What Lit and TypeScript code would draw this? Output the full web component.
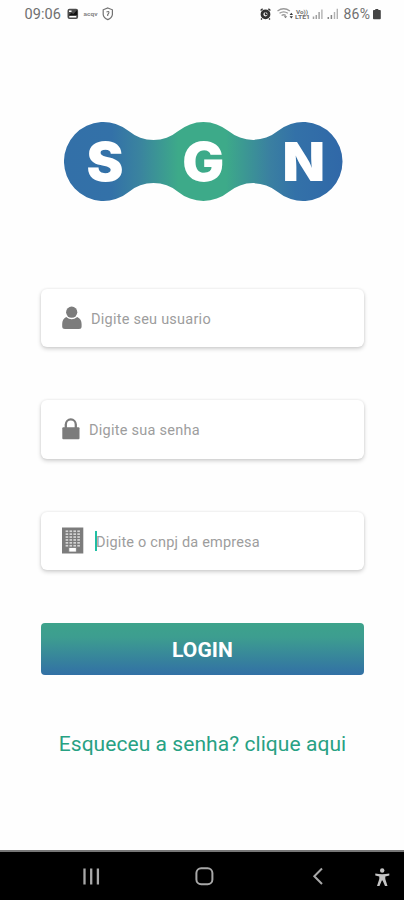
import { LitElement, html, css, svg } from "lit";
import { customElement } from "lit/decorators.js";

const userIcon = html`<svg width="20" height="24" viewBox="0 0 20 24" fill="#7c7c7c">
  <circle cx="9.7" cy="6.2" r="5.6" />
  <path d="M4.2 10.900 Q9.700 15.400 15.200 10.900 Q19.600 13 19.600 18 V20.500 Q19.600 23 17 23 H3 Q.2 23 .2 20.500 V18 Q.2 13 4.200 10.900Z" />
</svg>`;

const lockIcon = html`<svg width="18" height="22" viewBox="0 0 18 22">
  <path d="M3.8 11 V6.6 a5 5.2 0 0 1 10 0 V11" fill="none" stroke="#7c7c7c" stroke-width="2.3" />
  <rect x=".3" y="9.2" width="17.2" height="12" rx="1" fill="#7c7c7c" />
</svg>`;

const windows = [0, 1, 2, 3, 4, 5].flatMap((row) =>
  [0, 1, 2, 3].map(
    (col) => svg`<rect x=${3.6 + col * 3.9} y=${3.4 + row * 2.9} width="2.6" height="1.700" />`
  )
);
const buildingIcon = html`<svg width="22" height="27" viewBox="0 0 22 27">
  <path d="M0 .5 H21.3 V26.5 H0Z" fill="#7c7c7c" />
  <g fill="#d4d4d4">${windows}</g>
  <path d="M6.800 20.500 h7.600 v4.500 H6.800z" fill="#fff" stroke="#7c7c7c" stroke-width=".8" />
</svg>`;

@customElement("status-bar")
class StatusBar extends LitElement {
  static styles = css`
    :host { display: block; height: 28px; }
    svg { display: block; }
    text { font-family: Roboto, sans-serif; fill: #707070; }
    .small { font-size: 6px; font-weight: 700; }
    .tiny { font-size: 6px; font-weight: 700; }
  `;
  render() {
    return html`<svg width="404" height="28" viewBox="0 0 404 28">
      <text x="24.5" y="18.600" font-size="14.5" textLength="36.5">09:06</text>
      <rect x="67.5" y="8.7" width="10.6" height="10.4" rx="2" fill="#4c4c4c" />
      <path d="M69 11.300 h2.500 M69.300 16.800 h7" stroke="#fff" stroke-width="1.600" />
      <path d="M68.500 15.200 l3-2.200 2 1 3.600-4 v5 z" fill="#111" />
      <text class="tiny" x="83.500" y="16" textLength="14" lengthAdjust="spacingAndGlyphs" opacity=".85">acqv</text>
      <path d="M107.8 8 l4.6 1.8 v4.8 q-.6 3.5-4.6 5 q-4-1.500-4.600-5 v-4.800z" fill="none" stroke="#727272" stroke-width="1.2" />
      <path d="M106.500 12 q2.600-1.300 2.400.7 q-.200 1.200-1.200 1.800 v1.500" fill="none" stroke="#727272" stroke-width="1.1" />
      <circle cx="265.500" cy="14.300" r="3.500" fill="none" stroke="#303030" stroke-width="2.800" />
      <path d="M260.600 10.500 l2-1.700 M270.400 10.500 l-2-1.700 M262 18.600 l-1 1 M269 18.600 l1 1 M265.500 12.500 v2 h2" stroke="#303030" stroke-width="1.400" fill="none" />
      <g fill="none" stroke="#9a9a9a" stroke-width="1.300">
        <path d="M277.500 11 q6.200-4.500 12.400 0 M279.500 13.300 q4.200-3 8.400 0 M281.600 15.500 q2.200-1.500 4.200 0" />
      </g>
      <path d="M285.500 18.300 l-1.700-2 h3.400z" fill="#777" />
      <path d="M291.300 12.800 l1.700 2.200h-3.400z M291.300 18.400 l-1.700-2.200h3.400z" fill="#333" />
      <text class="small" x="296" y="13.600" textLength="12" lengthAdjust="spacingAndGlyphs">Vo))</text>
      <text class="small" x="295" y="19" textLength="15" lengthAdjust="spacingAndGlyphs">LTE1</text>
      <path d="M313.500 19 v-2.500 M316.300 19 v-4 M319.100 19 v-7" stroke="#a0a0a0" stroke-width="1.500" />
      <path d="M321.900 19 V9.500 M334.500 19 v-7 M337.300 19 V8.800" stroke="#b2b2b2" stroke-width="1.400" />
      <path d="M328.300 19 v-2 M331.400 19 v-4" stroke="#858585" stroke-width="1.500" />
      <text x="343.500" y="18.600" font-size="14" textLength="26.500">86%</text>
      <path d="M375.300 9 h3 v1 h1.700 q.800 0 .800.800 v7.400 q0 1-.800 1 h-6.200 q-.800 0-.800-1 v-7.400 q0-.800.800-.800 h1.500z" fill="#444" />
    </svg>`;
  }
}

@customElement("brand-logo")
class BrandLogo extends LitElement {
  static styles = css`
    :host { display: block; }
    svg { display: block; }
    text { font-family: Inter, sans-serif; font-weight: 900; font-size: 54px; fill: #fff; }
  `;
  render() {
    return html`<svg width="280" height="82" viewBox="64 121 280 82">
      <defs>
        <linearGradient id="g" gradientUnits="userSpaceOnUse" x1="64" x2="343" y1="0" y2="0">
          <stop offset="0" stop-color="#3370a8" />
          <stop offset=".17" stop-color="#3371a8" />
          <stop offset=".27" stop-color="#3a839f" />
          <stop offset=".41" stop-color="#3daa89" />
          <stop offset=".58" stop-color="#3daa89" />
          <stop offset=".74" stop-color="#3a7fa1" />
          <stop offset=".83" stop-color="#3371a8" />
          <stop offset="1" stop-color="#3068a8" />
        </linearGradient>
      </defs>
      <path fill="url(#g)" d="M128.700 131.100 A39 39 0 0 0 178.300 131.100 A39.500 39.500 0 0 1 228.500 131.100 A39 39 0 0 0 277.800 131.100 A39.500 39.500 0 1 1 277.800 191.900 A39 39 0 0 0 228.500 191.900 A39.500 39.500 0 0 1 178.300 191.900 A39 39 0 0 0 128.700 191.900 A39.500 39.500 0 1 1 128.700 131.100Z" />
      <text x="86.500" y="180.700" textLength="37" lengthAdjust="spacingAndGlyphs">S</text>
      <text x="182.200" y="180.700" textLength="42" lengthAdjust="spacingAndGlyphs">G</text>
      <text x="282.500" y="180.700" textLength="42.500" lengthAdjust="spacingAndGlyphs">N</text>
    </svg>`;
  }
}

@customElement("nav-bar")
class NavBar extends LitElement {
  static styles = css`
    :host { display: block; height: 48px; background: #000; border-top: 2px solid #777; }
    svg { display: block; }
  `;
  render() {
    return html`<svg width="404" height="48" viewBox="0 852 404 48" fill="none" stroke="#a8a8a8" stroke-width="2">
      <path d="M84.500 868.500 V884.500 M91.200 868.500 V884.500 M97.900 868.500 V884.500" stroke-width="2.300" />
      <rect x="196.400" y="868.300" width="16" height="16" rx="4.800" />
      <path d="M322 868.500 L314.300 876.300 L322 884" />
      <circle cx="382.200" cy="870.500" r="2.200" fill="#c4c4c4" stroke="none" />
      <path d="M375.300 873.500 Q382 875 389.300 873.500 V875.400 L385.300 876.500 V879 L387.500 886 H385 L382.600 880.500 H381.800 L379.500 886 H377 L379.300 879 V876.500 L375.300 875.400Z" fill="#c4c4c4" stroke="none" />
    </svg>`;
  }
}

@customElement("app-root")
class AppRoot extends LitElement {
  static styles = css`
    :host {
      display: flex; flex-direction: column; width: 404px; height: 900px;
      background: #fefefe; font-family: Roboto, "Liberation Sans", sans-serif;
    }
    main { flex: 1; display: flex; flex-direction: column; padding: 0 40px 0 41px; }
    brand-logo { margin: 93px 0 0 23px; }
    .fields { display: flex; flex-direction: column; gap: 53px; margin-top: 85.500px; }
    .field {
      box-sizing: border-box; height: 58.500px; display: flex; align-items: center;
      padding: 0 21px; background: #fff; border-radius: 6px;
      box-shadow: 0 2px 4px rgba(0, 0, 0, .18), 0 0 3px rgba(0, 0, 0, .08);
      color: #9d9d9d; font-size: 14.500px; line-height: 20px; white-space: nowrap;
    }
    .field svg { display: block; flex: none; }
    .user, .pass { padding-top: 4px; }
    .user { margin-left: 9px; letter-spacing: .24px; }
    .pass { margin-left: 9px; letter-spacing: .26px; }
    .company { display: flex; align-items: center; margin-left: 11px; letter-spacing: .18px; }
    .company span { padding-top: 4px; }
    .caret { width: 2px; height: 20px; margin-right: -1px; background: #20bfa4; }
    .login {
      height: 52px; margin-top: 53px; border: 0; border-radius: 4px;
      background: linear-gradient(#3da38b, #3d9d90 28%, #3270a5);
      color: #fff; font: 700 21px/54px Roboto, sans-serif; padding: 0; letter-spacing: .1px;
    }
    .forgot {
      margin-top: 55px; text-align: center; color: #27a183; font-size: 21px; line-height: 28px;
      letter-spacing: .06px; white-space: nowrap;
    }
  `;
  render() {
    return html`
      <status-bar></status-bar>
      <main>
        <brand-logo></brand-logo>
        <div class="fields">
          <div class="field">${userIcon}<span class="user">Digite seu usuario</span></div>
          <div class="field">${lockIcon}<span class="pass">Digite sua senha</span></div>
          <div class="field">${buildingIcon}<span class="company"><i class="caret"></i><span>Digite o cnpj da empresa</span></span></div>
        </div>
        <button class="login">LOGIN</button>
        <div class="forgot">Esqueceu a senha? clique aqui</div>
      </main>
      <nav-bar></nav-bar>
    `;
  }
}
